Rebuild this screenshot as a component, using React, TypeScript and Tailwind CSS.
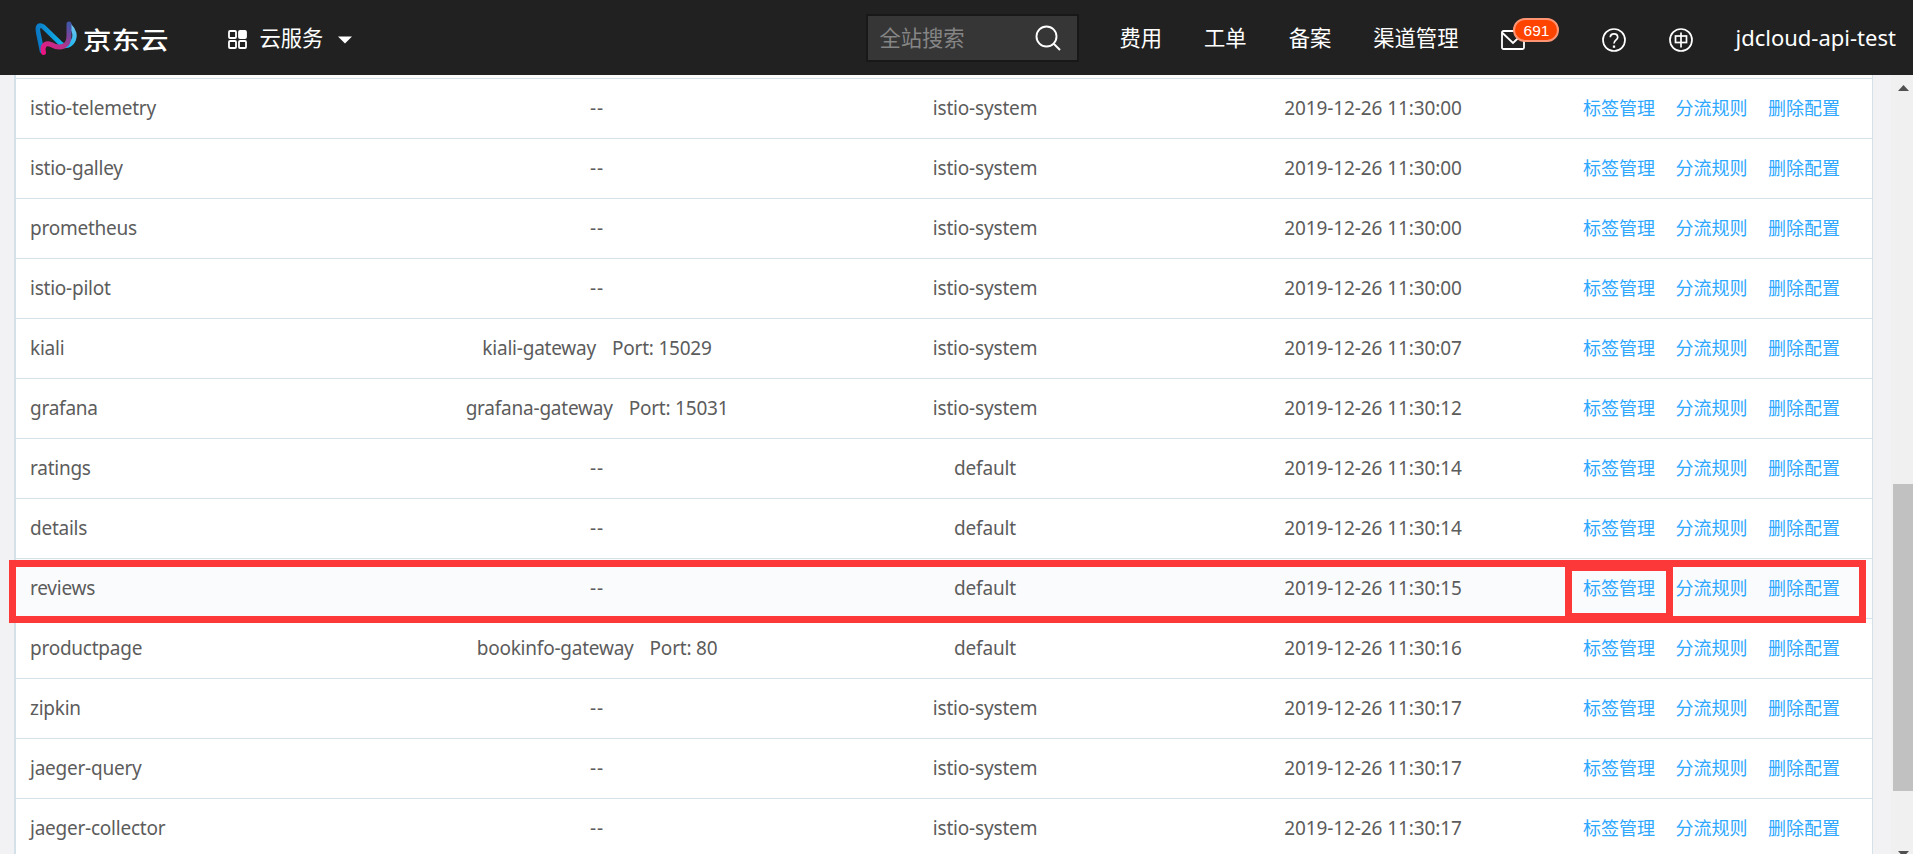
import React from "react";

type Service = { name: string; gateway?: string; port?: number; ns: string; time: string; active?: boolean };

const services: Service[] = [
  { name: "istio-telemetry", ns: "istio-system", time: "11:30:00" },
  { name: "istio-galley", ns: "istio-system", time: "11:30:00" },
  { name: "prometheus", ns: "istio-system", time: "11:30:00" },
  { name: "istio-pilot", ns: "istio-system", time: "11:30:00" },
  { name: "kiali", gateway: "kiali-gateway", port: 15029, ns: "istio-system", time: "11:30:07" },
  { name: "grafana", gateway: "grafana-gateway", port: 15031, ns: "istio-system", time: "11:30:12" },
  { name: "ratings", ns: "default", time: "11:30:14" },
  { name: "details", ns: "default", time: "11:30:14" },
  { name: "reviews", ns: "default", time: "11:30:15", active: true },
  { name: "productpage", gateway: "bookinfo-gateway", port: 80, ns: "default", time: "11:30:16" },
  { name: "zipkin", ns: "istio-system", time: "11:30:17" },
  { name: "jaeger-query", ns: "istio-system", time: "11:30:17" },
  { name: "jaeger-collector", ns: "istio-system", time: "11:30:17" },
];

function Logo() {
  return (
    <svg className="mt-0.5" width="44" height="38" viewBox="0 0 44 38" fill="none" strokeLinecap="round" strokeLinejoin="round">
      <defs>
        <linearGradient id="left" gradientUnits="userSpaceOnUse" x1="4" y1="33" x2="28" y2="28">
          <stop offset="0" stopColor="#0a6fbe" />
          <stop offset="1" stopColor="#10b0ea" />
        </linearGradient>
        <linearGradient id="right" gradientUnits="userSpaceOnUse" x1="38" y1="6" x2="30" y2="28">
          <stop offset="0" stopColor="#6fc4ee" />
          <stop offset="1" stopColor="#10b6f0" />
        </linearGradient>
        <linearGradient id="pink" gradientUnits="userSpaceOnUse" x1="8" y1="34" x2="34" y2="4">
          <stop offset="0" stopColor="#f0127f" />
          <stop offset="0.5" stopColor="#b8328a" />
          <stop offset="1" stopColor="#4456a8" />
        </linearGradient>
      </defs>
      <path d="M36 6C40 10 42 16 39 21C36 26 31 27 27 25" stroke="url(#right)" strokeWidth="4.500" />
      <path d="M8 31L4.500 14C3 7 4 4 9 6.500L26 23C28 25 30 26 32 25.500" stroke="url(#left)" strokeWidth="4.600" />
      <path d="M9.500 32.500C8 26 11 22 17 24.500C27 30 35 26 35 16V4" stroke="url(#pink)" strokeWidth="5" />
    </svg>
  );
}

function Header() {
  return (
    <header className="flex h-[75px] shrink-0 items-center bg-[#212121] pl-[34px] text-[21.3px] text-white">
      <Logo />
      <span className="ml-[5px] mt-1.5 scale-y-[0.84] text-[28.500px] font-medium leading-none">京东云</span>
      <svg className="ml-[59px] mt-1" width="19" height="19" viewBox="0 0 19 19" fill="none" stroke="#fff" strokeWidth="1.800">
        <rect x="1" y="1" width="7" height="7" rx="1" />
        <rect x="11" y="1" width="7" height="7" rx="1" fill="#fff" />
        <rect x="1" y="11" width="7" height="7" rx="1" />
        <rect x="11" y="11" width="7" height="7" rx="1" />
      </svg>
      <span className="ml-[13px] mt-px">云服务</span>
      <svg className="ml-[15px] mt-1" width="14" height="8" viewBox="0 0 14 8"><path d="M0 0.500H14L7 7.500Z" fill="#fff" /></svg>
      <div className="ml-[514px] flex h-[48px] w-[213px] items-center justify-between border-2 border-[#181818] bg-[#363636] pl-[11px] pr-4 text-[#858585]">
        <span>全站搜索</span>
        <svg width="26" height="26" viewBox="0 0 26 26" fill="none" stroke="#fff" strokeWidth="1.900">
          <circle cx="11.500" cy="11.500" r="10" />
          <path d="M18.500 18.500L25 25" />
        </svg>
      </div>
      <span className="ml-[40px] mt-px">费用</span>
      <span className="ml-[42px] mt-px">工单</span>
      <span className="ml-[42px] mt-px">备案</span>
      <span className="ml-[42px] mt-px">渠道管理</span>
      <div className="relative ml-[43px] mt-[5px]">
        <svg width="24" height="20" viewBox="0 0 24 20" fill="none" stroke="#fff" strokeWidth="1.800">
          <rect x="1" y="1" width="22" height="18" rx="1.500" />
          <path d="M1 2.500L12 13L23 2.500" />
        </svg>
        <span className="absolute -top-[12px] left-[12px] flex h-6 w-[46px] items-center justify-center rounded-full border-2 border-[#ff9472] bg-[#ff4400] pt-px font-['Liberation_Sans',sans-serif] text-[15.500px] leading-none">691</span>
      </div>
      <svg className="ml-[77px] mt-[5px]" width="24" height="24" viewBox="0 0 24 24" fill="none" stroke="#fff" strokeWidth="1.700">
        <circle cx="12" cy="12" r="11" />
        <path d="M8.300 9.300C8.300 4.800 15.700 4.800 15.700 9.300C15.700 12 12 11.800 12 15.500" />
        <path d="M12 17.500V19.800" strokeWidth="2.300" />
      </svg>
      <svg className="ml-[43px] mt-[5px]" width="24" height="24" viewBox="0 0 24 24" fill="none" stroke="#fff" strokeWidth="1.700">
        <circle cx="12" cy="12" r="11" />
        <rect x="6.500" y="8" width="11" height="6.500" />
        <path d="M12 4.500V19.500" />
      </svg>
      <span className="ml-[42px] whitespace-nowrap text-[22px]">jdcloud-api-test</span>
    </header>
  );
}

function Row({ service }: { service: Service }) {
  return (
    <div className={`flex h-[60px] shrink-0 items-center border-b border-[#d5e1e9] ${service.active ? "bg-[#fafbfd]" : "bg-white"}`}>
      <div className="w-[387px] pl-[14px] tracking-[-0.24px]">{service.name}</div>
      <div className="w-[388px] whitespace-pre text-center tracking-[-0.22px]">
        {service.gateway ? (
          <>
            <span className="mr-[16px]">{service.gateway}</span>
            <span>Port: {service.port}</span>
          </>
        ) : (
          <span className="tracking-[0.8px]">--</span>
        )}
      </div>
      <div className="w-[388px] text-center tracking-[-0.18px]">{service.ns}</div>
      <div className="w-[388px] text-center tracking-[-0.1px]">2019-12-26 {service.time}</div>
      <div className="flex gap-[20.500px] whitespace-nowrap pl-4 text-[18px] text-[#2ea7ff]">
        <a className="w-[72px]">标签管理</a>
        <a className="w-[72px]">分流规则</a>
        <a className="w-[72px]">删除配置</a>
      </div>
    </div>
  );
}

export default function App() {
  return (
    <div className="relative flex h-[854px] w-[1913px] flex-col overflow-hidden bg-[#f2f2f5] font-['Noto_Sans','Noto_Sans_CJK_SC',sans-serif]">
      <Header />
      <main className="flex min-h-0 flex-1">
        <div className="ml-3.5 flex w-[1859px] shrink-0 flex-col overflow-hidden border-l-2 border-r border-[#d5e1e9] text-[19px] text-[#5c5c5c]">
          <div className="h-1 shrink-0 border-b border-[#d5e1e9] bg-white" />
          {services.map((s) => (
            <Row key={s.name} service={s} />
          ))}
        </div>
        <div className="ml-[18px] flex w-[22px] flex-col items-end overflow-hidden bg-[#f0f0f0]">
          <svg className="mr-1 mt-2.5 shrink-0" width="11" height="6" viewBox="0 0 11 6"><path d="M0 6L5.500 0L11 6Z" fill="#505050" /></svg>
          <div className="mt-[393px] h-[307px] w-5 shrink-0 bg-[#c1c1c1]" />
          <svg className="mr-1 mt-[60px] shrink-0" width="11" height="6" viewBox="0 0 11 6"><path d="M0 0L5.500 6L11 0Z" fill="#505050" /></svg>
        </div>
      </main>
      <div className="absolute left-[9px] top-[560px] h-[63px] w-[1857px] border-[7px] border-[#fc3838]" />
      <div className="absolute left-[1565px] top-[564px] h-[56px] w-[108px] border-[7px] border-[#fc3838]" />
    </div>
  );
}
